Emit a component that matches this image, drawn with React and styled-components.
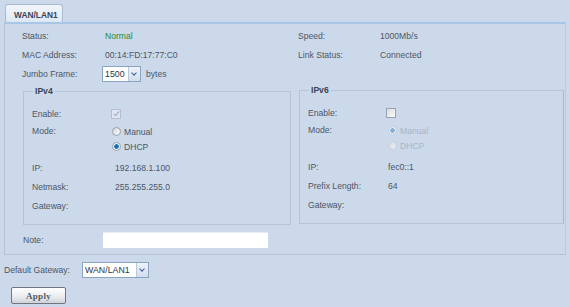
import React from 'react'
import styled, { createGlobalStyle } from 'styled-components';

const Global = createGlobalStyle`
	html, body {
		margin: 0;
		padding: 0;
		background: #cbd9eb;
	}
	body {
		font-family: "Liberation Sans", Arial, sans-serif;
		font-size: 8.6px;
		color: #4e5665;
	}
`;

const App = () => {
	return (
		<Page>
			<Global />
			<Tabs>
				<Tab>WAN/LAN1</Tab>
			</Tabs>
			<Panel>
				<InfoGrid>
					<Label>Status:</Label>
					<Value $ok>Normal</Value>
					<Label>Speed:</Label>
					<Value>1000Mb/s</Value>
					<Label>MAC Address:</Label>
					<Value>00:14:FD:17:77:C0</Value>
					<Label>Link Status:</Label>
					<Value>Connected</Value>
					<Label>Jumbo Frame:</Label>
					<Value $pull>
						<Select $width={27}>1500</Select>
						<Unit>bytes</Unit>
					</Value>
				</InfoGrid>
				<Groups>
					<Group $top={2}>
						<Legend>IPv4</Legend>
						<Row>
							<FieldLabel>Enable:</FieldLabel>
							<Check $checked $disabled />
						</Row>
						<ModeRow>
							<FieldLabel>Mode:</FieldLabel>
							<Radios>
								<RadioLine><Radio />Manual</RadioLine>
								<RadioLine><Radio $on />DHCP</RadioLine>
							</Radios>
						</ModeRow>
						<Row $gap>
							<FieldLabel>IP:</FieldLabel>
							<FieldValue>192.168.1.100</FieldValue>
						</Row>
						<Row>
							<FieldLabel>Netmask:</FieldLabel>
							<FieldValue>255.255.255.0</FieldValue>
						</Row>
						<Row>
							<FieldLabel>Gateway:</FieldLabel>
						</Row>
					</Group>
					<Group $top={1} $right>
						<Legend>IPv6</Legend>
						<Row>
							<FieldLabel>Enable:</FieldLabel>
							<Check />
						</Row>
						<ModeRow>
							<FieldLabel>Mode:</FieldLabel>
							<Radios>
								<RadioLine $disabled><Radio $on $disabled />Manual</RadioLine>
								<RadioLine $disabled><Radio $disabled />DHCP</RadioLine>
							</Radios>
						</ModeRow>
						<Row $gap>
							<FieldLabel>IP:</FieldLabel>
							<FieldValue $near>fec0::1</FieldValue>
						</Row>
						<Row>
							<FieldLabel>Prefix Length:</FieldLabel>
							<FieldValue $near>64</FieldValue>
						</Row>
						<Row>
							<FieldLabel>Gateway:</FieldLabel>
						</Row>
					</Group>
				</Groups>
				<NoteRow>
					<NoteLabel>Note:</NoteLabel>
					<NoteInput />
				</NoteRow>
			</Panel>
			<GatewayRow>
				<GatewayLabel>Default Gateway:</GatewayLabel>
				<Select $width={55}>WAN/LAN1</Select>
			</GatewayRow>
			<ApplyButton>Apply</ApplyButton>
		</Page>
	)
}

export default App;

const Page = styled.div`
	width: 570px;
	height: 307px;
	padding: 4px 0 0 4px;
	box-sizing: border-box;
`;
const Tabs = styled.div`
	display: flex;
	height: 18px;
	padding-left: 1px;
`;
const Tab = styled.div`
	width: 58px;
	box-sizing: border-box;
	border: 1px solid #a9bbd0;
	border-bottom: none;
	border-radius: 3px 3px 0 0;
	background: linear-gradient(#f2f6fb, #dde8f4);
	font-weight: bold;
	color: #3c4454;
	font-size: 8.4px;
	padding: 5px 0 0 8px;
`;
const Panel = styled.div`
	width: 562px;
	height: 233px;
	box-sizing: border-box;
	border: 1px solid #b7c3d2;
	border-top: 2px solid #a8c6e6;
	border-right-color: #c0cad8;
	padding: 2px 0 0 17px;
`;
const InfoGrid = styled.div`
	display: grid;
	grid-template-columns: 83px 193px 82px 1fr;
	grid-auto-rows: 19px;
	align-items: center;
`;
const Label = styled.div``;
const Value = styled.div`
	display: flex;
	align-items: center;
	margin-left: ${p => (p.$pull ? -3 : 0)}px;
	color: ${p => (p.$ok ? '#2c8a2c' : 'inherit')};
`;
const Select = styled.div`
	display: flex;
	align-items: center;
	height: 16px;
	box-sizing: border-box;
	width: ${p => p.$width + 12}px;
	border: 1px solid #8aa4c2;
	background: #fff;
	color: #2e3440;
	font-size: 8.8px;
	padding-left: 2px;
	position: relative;
	&::after {
		content: '';
		position: absolute;
		right: 0;
		top: 0;
		bottom: 0;
		width: 11px;
		background: linear-gradient(#eef3f9, #d3deeb);
		border-left: 1px solid #b8c8da;
	}
	&::before {
		content: '';
		position: absolute;
		right: 4px;
		top: 4px;
		width: 3px;
		height: 3px;
		border-right: 1.5px solid #3a5d9c;
		border-bottom: 1.5px solid #3a5d9c;
		transform: rotate(45deg);
		z-index: 1;
	}
`;
const Unit = styled.span`
	margin-left: 5px;
`;
const Groups = styled.div`
	display: flex;
	align-items: flex-start;
	gap: 8px;
	margin-left: 1px;
`;
const Group = styled.fieldset`
	margin: ${p => p.$top}px 0 0 0;
	width: ${p => (p.$right ? 265 : 268)}px;
	box-sizing: border-box;
	border: 1px solid #b9c4d3;
	border-right-color: ${p => (p.$right ? '#b0b8c8' : '#b9c4d3')};
	padding: 7px 0 9px 8px;
	min-width: 0;
`;
const Legend = styled.legend`
	font-weight: bold;
	font-size: 8.6px;
	line-height: 12px;
	color: #3c4454;
	padding: 0 2px;
	margin-left: 1px;
`;
const Row = styled.div`
	display: flex;
	align-items: center;
	height: 19px;
	margin-top: ${p => (p.$gap ? 4 : 0)}px;
`;
const ModeRow = styled.div`
	display: flex;
	align-items: flex-start;
`;
const FieldLabel = styled.div`
	width: 79px;
	flex-shrink: 0;
	line-height: 15px;
	padding-top: 1px;
`;
const FieldValue = styled.div`
	margin-left: ${p => (p.$near ? 1 : 4)}px;
`;
const Check = styled.span`
	width: 10px;
	height: 10px;
	box-sizing: border-box;
	border: 1px solid ${p => (p.$disabled ? '#b4bfd4' : '#9aa2ae')};
	background: ${p => (p.$disabled ? '#dfe6f0' : 'linear-gradient(135deg, #d8dce2, #fbfbfc)')};
	position: relative;
	margin-left: ${p => (p.$disabled ? 0 : -1)}px;
	&::after {
		content: '';
		display: ${p => (p.$checked ? 'block' : 'none')};
		position: absolute;
		left: 3px;
		top: 0px;
		width: 2px;
		height: 5px;
		border-right: 1.2px solid #9aa8d0;
		border-bottom: 1.2px solid #9aa8d0;
		transform: rotate(40deg);
	}
`;
const Radios = styled.div`
	display: flex;
	flex-direction: column;
	padding-top: 1px;
`;
const RadioLine = styled.div`
	display: flex;
	align-items: center;
	height: 15px;
	color: ${p => (p.$disabled ? '#aab4c4' : 'inherit')};
`;
const Radio = styled.span`
	width: 9px;
	height: 9px;
	border-radius: 50%;
	box-sizing: border-box;
	margin: 0 3px 0 1px;
	border: 1px solid ${p => (p.$disabled ? '#c4ccd8' : '#9aa1ab')};
	background: ${p => (p.$on
		? `radial-gradient(circle, ${p.$disabled ? '#6aa6d4' : '#1b6fb8'} 0 2px, #f4f6f9 2.6px)`
		: 'linear-gradient(135deg, #d4d8de, #fafafb)')};
	opacity: ${p => (p.$disabled ? 0.75 : 1)};
`;
const NoteRow = styled.div`
	display: flex;
	align-items: center;
	height: 17px;
	margin-top: 6px;
`;
const NoteLabel = styled.div`
	width: 80px;
	padding-left: 1px;
`;
const NoteInput = styled.div`
	width: 165px;
	height: 15px;
	background: #fff;
	border-top: 1px solid #e4ebf3;
`;
const GatewayRow = styled.div`
	display: flex;
	align-items: center;
	height: 16px;
	margin-top: 7px;
`;
const GatewayLabel = styled.span`
	width: 78px;
`;
const ApplyButton = styled.button`
	display: block;
	margin: 9px 0 0 7px;
	width: 55px;
	height: 17px;
	padding: 0;
	border: 1px solid #6f7680;
	border-radius: 2px;
	background: linear-gradient(#ffffff, #e8eaee 60%, #cfd3d9);
	font-family: "Liberation Serif", "Times New Roman", serif;
	font-size: 9px;
	font-weight: bold;
	letter-spacing: 0.3px;
	color: #555a63;
`;
